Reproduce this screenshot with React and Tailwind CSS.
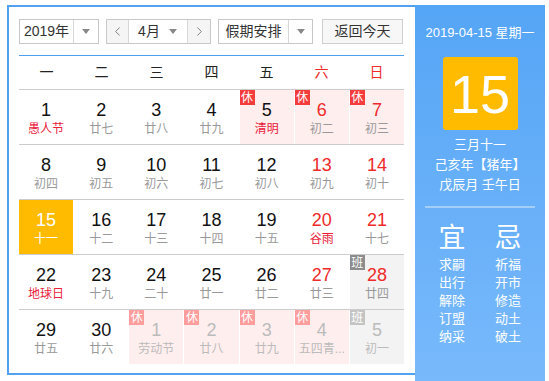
import { ChevronLeft, ChevronRight } from 'lucide-react'

const weeks = [
  [
    { d: 1, l: '愚人节', fest: true },
    { d: 2, l: '廿七' },
    { d: 3, l: '廿八' },
    { d: 4, l: '廿九' },
    { d: 5, l: '清明', fest: true, tag: '休' },
    { d: 6, l: '初二', red: true, tag: '休' },
    { d: 7, l: '初三', red: true, tag: '休' },
  ],
  [
    { d: 8, l: '初四' },
    { d: 9, l: '初五' },
    { d: 10, l: '初六' },
    { d: 11, l: '初七' },
    { d: 12, l: '初八' },
    { d: 13, l: '初九', red: true },
    { d: 14, l: '初十', red: true },
  ],
  [
    { d: 15, l: '十一', today: true },
    { d: 16, l: '十二' },
    { d: 17, l: '十三' },
    { d: 18, l: '十四' },
    { d: 19, l: '十五' },
    { d: 20, l: '谷雨', red: true, fest: true },
    { d: 21, l: '十七', red: true },
  ],
  [
    { d: 22, l: '地球日', fest: true },
    { d: 23, l: '十九' },
    { d: 24, l: '二十' },
    { d: 25, l: '廿一' },
    { d: 26, l: '廿二' },
    { d: 27, l: '廿三', red: true },
    { d: 28, l: '廿四', red: true, tag: '班' },
  ],
  [
    { d: 29, l: '廿五' },
    { d: 30, l: '廿六' },
    { d: 1, l: '劳动节', other: true, tag: '休' },
    { d: 2, l: '廿八', other: true, tag: '休' },
    { d: 3, l: '廿九', other: true, tag: '休' },
    { d: 4, l: '五四青...', other: true, tag: '休' },
    { d: 5, l: '初一', other: true, tag: '班' },
  ],
]

const days = ['一', '二', '三', '四', '五', '六', '日']
const yi = ['求嗣', '出行', '解除', '订盟', '纳采']
const ji = ['祈福', '开市', '修造', '动土', '破土']

function Caret() {
  return <span className="w-0 h-0 border-l-[4px] border-r-[4px] border-t-[5px] border-l-transparent border-r-transparent border-t-[#888]" />
}

function Cell({ c }) {
  let bg = ''
  let badge = ''
  if (c.tag === '休') {
    bg = 'bg-[#ffeeee]'
    badge = c.other ? 'bg-[#ff9c9c]' : 'bg-[#f53c3c]'
  }
  if (c.tag === '班') {
    bg = 'bg-[#f3f3f3]'
    badge = c.other ? 'bg-[#c4c4c4]' : 'bg-[#8c8c8c]'
  }
  if (c.today) bg = 'bg-[#ffbb00]'

  let num = 'text-[#111]'
  let lun = 'text-[#999]'
  if (c.red) num = 'text-[#ee2a2a]'
  if (c.fest) lun = 'text-[#e8203a]'
  if (c.today) {
    num = 'text-white'
    lun = 'text-white'
  }
  if (c.other) {
    num = 'text-[#bbb]'
    lun = 'text-[#bbb]'
  }

  return (
    <div className={`relative h-[54px] flex flex-col items-center pt-[9px] ${bg}`}>
      {c.tag && (
        <span className={`absolute left-0 top-0 w-[15px] h-[15px] flex items-center justify-center text-[12px] leading-none text-white ${badge}`}>
          {c.tag}
        </span>
      )}
      <span className={`text-[18px] leading-[22px] ${num}`}>{c.d}</span>
      <span className={`text-[12px] leading-[16px] whitespace-nowrap ${lun}`}>{c.l}</span>
    </div>
  )
}

export default function App() {
  return (
    <div
      className="w-[549px] h-[381px] overflow-hidden bg-white"
      style={{ fontFamily: '"Liberation Sans", "Noto Sans CJK SC", sans-serif' }}
    >
      <div className="ml-[7px] mt-[5px] flex">
        <div className="w-[408px] h-[370px] border-2 border-r-0 border-[#52a0f0] px-[10px] pt-[12px]">
          <div className="flex items-center h-[25px] text-[14px] text-[#333]">
            <div className="w-[80px] h-[25px] flex border border-[#c8c8c8]">
              <div className="flex-1 flex items-center justify-center">2019年</div>
              <div className="w-[25px] border-l border-[#d8d8d8] flex items-center justify-center">
                <Caret />
              </div>
            </div>
            <div className="ml-[7px] w-[105px] h-[25px] flex border border-[#c8c8c8]">
              <div className="w-[21px] bg-[#f5f5f5] flex items-center justify-center text-[#666]">
                <ChevronLeft size={15} strokeWidth={1.3} />
              </div>
              <div className="flex-1 border-l border-r border-[#d8d8d8] flex items-center pl-[5px]">
                <span className="w-[30px] text-center">4月</span>
                <span className="ml-auto mr-[10px] flex"><Caret /></span>
              </div>
              <div className="w-[22px] bg-[#f5f5f5] flex items-center justify-center text-[#666]">
                <ChevronRight size={15} strokeWidth={1.3} />
              </div>
            </div>
            <div className="ml-[7px] w-[95px] h-[25px] flex border border-[#c8c8c8]">
              <div className="flex-1 flex items-center justify-center">假期安排</div>
              <div className="w-[24px] border-l border-[#d8d8d8] flex items-center justify-center">
                <Caret />
              </div>
            </div>
            <div className="ml-[9px] w-[81px] h-[25px] flex items-center justify-center border border-[#cfcfcf] bg-[#f7f7f7]">
              返回今天
            </div>
          </div>

          <div className="mt-[11px] w-[385px] h-[35px] border-t border-t-[#4f9ef0] border-b border-b-[#cccccc] grid grid-cols-7 items-center text-[14px]">
            {days.map((d, i) => (
              <div key={d} className={`text-center ${i >= 5 ? 'text-[#ee2a2a]' : 'text-[#222]'}`}>{d}</div>
            ))}
          </div>

          <div className="w-[385px]">
            {weeks.map((w, i) => (
              <div key={i} className={`grid grid-cols-7 gap-x-px ${i < 4 ? 'border-b border-[#cccccc]' : ''}`}>
                {w.map((c, j) => (
                  <Cell key={j} c={c} />
                ))}
              </div>
            ))}
          </div>
        </div>

        <div className="w-[130px] h-[376px] bg-gradient-to-b from-[#55a5f6] to-[#78b9fb] flex flex-col items-center text-white">
          <div className="mt-[19px] text-[13px] leading-[18px]">2019-04-15 星期一</div>
          <div className="mt-[15px] w-[75px] h-[73px] rounded-[3px] bg-[#ffbb00] flex items-center justify-center text-[54px] leading-none font-light">
            15
          </div>
          <div className="mt-[5px] text-[13px] leading-[20px]">三月十一</div>
          <div className="text-[13px] leading-[20px]">己亥年【猪年】</div>
          <div className="text-[13px] leading-[20px]">戊辰月 壬午日</div>
          <div className="mt-[11px] w-[110px] h-[2px] bg-[#a4cdf7]" />
          <div className="mt-[14px] flex gap-[24px]">
            <div className="flex flex-col items-center w-[32px]">
              <div className="text-[27px] leading-[32px]">宜</div>
              <div className="mt-[2px] flex flex-col items-center text-[13px] leading-[18px]">
                {yi.map((t) => <span key={t}>{t}</span>)}
              </div>
            </div>
            <div className="flex flex-col items-center w-[32px]">
              <div className="text-[27px] leading-[32px]">忌</div>
              <div className="mt-[2px] flex flex-col items-center text-[13px] leading-[18px]">
                {ji.map((t) => <span key={t}>{t}</span>)}
              </div>
            </div>
          </div>
        </div>
      </div>
    </div>
  )
}
